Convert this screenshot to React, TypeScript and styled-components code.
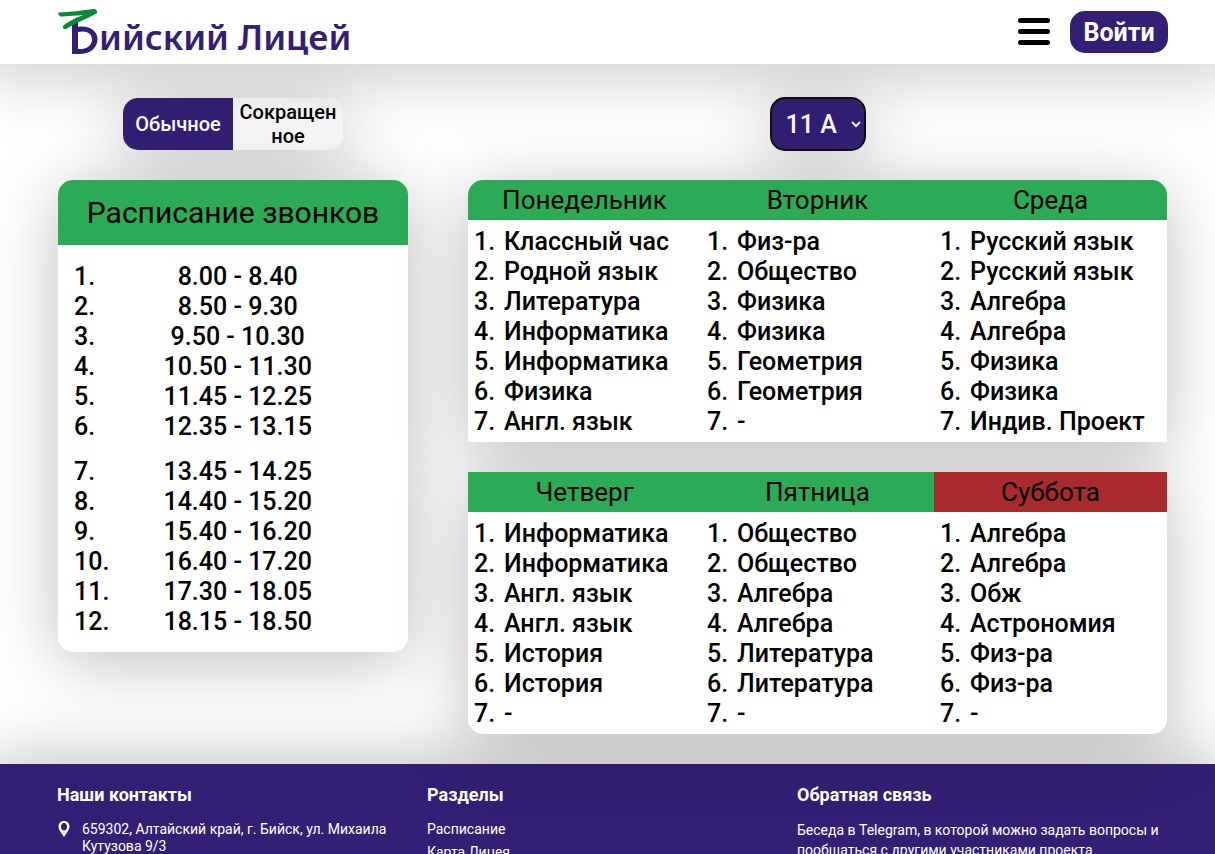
import React, { useState } from "react";
import styled, { createGlobalStyle } from "styled-components";

const purple = "#332075";
const green = "#2cab56";
const red = "#a82a2c";
const softShadow = "0 10px 70px rgba(0, 0, 0, 0.25)";

const GlobalStyle = createGlobalStyle`
  *, *::before, *::after { box-sizing: border-box; }
  body {
    margin: 0;
    background: #fff;
    color: #000;
    font-family: Roboto, "Liberation Sans", sans-serif;
    overflow-x: hidden;
  }
  button, select { font-family: inherit; }
  h2, h3, ol, ul, p { margin: 0; padding: 0; }
`;

const Header = styled.header`
  position: relative;
  z-index: 2;
  display: flex;
  align-items: center;
  justify-content: space-between;
  height: 64px;
  padding: 0 47px 0 58px;
  background: #fff;
  box-shadow: 0 0 60px 20px rgba(0, 0, 0, 0.17);
`;

const Logo = styled.a`
  display: flex;
  align-items: flex-start;
  height: 64px;
  color: ${purple};
  text-decoration: none;
  font: 600 35px/74px "Noto Sans", "Open Sans", sans-serif;
  white-space: nowrap;
`;

const LogoMark = styled.svg`
  flex: none;
  width: 41px;
  height: 64px;
`;

const HeaderActions = styled.div`
  display: flex;
  align-items: center;
  gap: 20px;
`;

const MenuButton = styled.button`
  display: flex;
  flex-direction: column;
  gap: 6px;
  width: 32px;
  padding: 0 0 1px;
  border: 0;
  background: none;
  cursor: pointer;
`;

const MenuBar = styled.span`
  height: 5px;
  border-radius: 3px;
  background: #000;
`;

const LoginButton = styled.button`
  width: 98px;
  height: 42px;
  padding: 2px 0 0;
  border: 0;
  border-radius: 15px;
  background: ${purple};
  color: #fff;
  font-size: 25px;
  font-weight: 700;
  line-height: 40px;
  cursor: pointer;
`;

const Main = styled.main`
  position: relative;
  z-index: 1;
  display: grid;
  grid-template-columns: 350px minmax(0, 1fr);
  column-gap: 60px;
  padding: 32px 48px 30px 58px;
`;

const Column = styled.section`
  display: flex;
  flex-direction: column;
`;

const Controls = styled.div`
  display: flex;
  align-items: center;
  justify-content: center;
  height: 56px;
  margin: 0 0 28px;
`;

const Toggle = styled.div`
  display: flex;
  width: 220px;
  height: 52px;
  overflow: hidden;
  border-radius: 15px;
  box-shadow: ${softShadow};
`;

const ToggleButton = styled.button<{ $active: boolean }>`
  flex: 1 1 0;
  min-width: 0;
  padding: 0 6px;
  border: 0;
  background: ${(p) => (p.$active ? purple : "#f8f8f8")};
  color: ${(p) => (p.$active ? "#fff" : "#000")};
  font-size: 20px;
  font-weight: 500;
  line-height: 24px;
  overflow-wrap: anywhere;
  cursor: pointer;
`;

const ClassSelect = styled.select`
  width: 96px;
  height: 54px;
  padding: 0 0 0 10px;
  border: 2px solid #111;
  border-radius: 15px;
  background: ${purple};
  color: #fff;
  font-size: 25px;
  font-weight: 500;
  box-shadow: ${softShadow};
`;

const BellCard = styled.div`
  overflow: hidden;
  border-radius: 15px;
  background: #fff;
  box-shadow: ${softShadow};
`;

const BellTitle = styled.h2`
  background: ${green};
  font-size: 30px;
  font-weight: 400;
  line-height: 65px;
  text-align: center;
`;

const BellTable = styled.table`
  width: 100%;
  border-collapse: collapse;
  margin: 17px 0 15px;
  font-size: 25px;
  line-height: 30px;
`;

const BellGroup = styled.tbody`
  & + &::before {
    content: "";
    display: block;
    height: 15px;
  }
`;

const BellNumber = styled.th`
  width: 50px;
  padding: 0 0 0 16px;
  font-weight: 500;
  text-align: left;
`;

const BellTime = styled.td`
  padding: 0 42px 0 0;
  font-weight: 500;
  text-align: center;
`;

const Week = styled.div`
  position: relative;
  display: flex;
  flex-direction: column;
  gap: 30px;
  isolation: isolate;
`;

/* The shadow sits on a layer under both rows, so neither row darkens the other. */
const WeekRow = styled.div`
  position: relative;
  &:first-child { border-radius: 15px 15px 0 0; }
  &:last-child { border-radius: 0 0 15px 15px; }
  &::before {
    content: "";
    position: absolute;
    inset: 0;
    z-index: -1;
    border-radius: inherit;
    box-shadow: ${softShadow};
  }
`;

const WeekDays = styled.div`
  display: grid;
  grid-template-columns: repeat(3, minmax(0, 1fr));
  overflow: hidden;
  border-radius: inherit;
  background: #fff;
`;

const DayTitle = styled.h3<{ $today: boolean }>`
  padding-top: 1px;
  background: ${(p) => (p.$today ? red : green)};
  font-size: 26px;
  font-weight: 400;
  line-height: 39px;
  text-align: center;
`;

const Lessons = styled.ol`
  padding: 7px 6px 5px;
  list-style: none;
  font-size: 25px;
  font-weight: 500;
  line-height: 30px;
`;

const Lesson = styled.li`
  display: grid;
  grid-template-columns: 30px 1fr;
  white-space: nowrap;
`;

const Footer = styled.footer`
  display: grid;
  grid-template-columns: repeat(3, 1fr);
  min-height: 220px;
  padding: 20px 48px 30px 57px;
  background: ${purple};
  color: #fff;
  box-shadow: 0 0 60px 10px rgba(0, 0, 0, 0.22);
  font-size: 14px;
  line-height: 17px;
`;

const FooterTitle = styled.h3`
  margin: 0 0 14px;
  font-size: 18px;
  font-weight: 700;
  line-height: 22px;
`;

const Address = styled.p`
  display: flex;
  gap: 12px;
  max-width: 334px;
  padding-top: 1px;
`;

const Pin = styled.svg`
  flex: none;
  width: 13px;
  height: 17px;
`;

const LinkList = styled.ul`
  display: flex;
  flex-direction: column;
  gap: 6px;
  padding-top: 1px;
  list-style: none;
`;

const FooterLink = styled.a`
  color: inherit;
  text-decoration: none;
`;

const Feedback = styled.p`
  line-height: 20px;
`;

const bells = [
  ["8.00 - 8.40", "8.50 - 9.30", "9.50 - 10.30", "10.50 - 11.30", "11.45 - 12.25", "12.35 - 13.15"],
  ["13.45 - 14.25", "14.40 - 15.20", "15.40 - 16.20", "16.40 - 17.20", "17.30 - 18.05", "18.15 - 18.50"],
];

const week = [
  [
    { day: "Понедельник", lessons: ["Классный час", "Родной язык", "Литература", "Информатика", "Информатика", "Физика", "Англ. язык"] },
    { day: "Вторник", lessons: ["Физ-ра", "Общество", "Физика", "Физика", "Геометрия", "Геометрия", "-"] },
    { day: "Среда", lessons: ["Русский язык", "Русский язык", "Алгебра", "Алгебра", "Физика", "Физика", "Индив. Проект"] },
  ],
  [
    { day: "Четверг", lessons: ["Информатика", "Информатика", "Англ. язык", "Англ. язык", "История", "История", "-"] },
    { day: "Пятница", lessons: ["Общество", "Общество", "Алгебра", "Алгебра", "Литература", "Литература", "-"] },
    { day: "Суббота", lessons: ["Алгебра", "Алгебра", "Обж", "Астрономия", "Физ-ра", "Физ-ра", "-"] },
  ],
];

export default function App() {
  const [short, setShort] = useState(false);
  return (
    <>
      <GlobalStyle />
      <Header>
        <Logo href="#" aria-label="Бийский Лицей">
          <LogoMark viewBox="0 0 41 64" aria-hidden="true">
            <path
              fill={purple}
              fillRule="evenodd"
              d="M14 25 L20 21 V27 C31 25 39.500 31 39.500 39 C39.500 48 32 54 21 54 H14 Z M20 32 V49 C28 49.500 34 46 34 39.500 C34 33 28 30 20 32 Z"
            />
            <path
              fill="#088a36"
              d="M0.500 12.500 C12 12 24 10.500 36 9 C38.500 9 40 11.500 38.500 13.500 C30 18.500 17 23 9 28.500 C6.500 30 4.500 29 5 26 C10 21.500 18 18 25 15 C19 15.500 10 16 3 16.500 C1 16 0 14 0.500 12.500 Z"
            />
          </LogoMark>
          <span>ийский Лицей</span>
        </Logo>
        <HeaderActions>
          <MenuButton type="button" aria-label="Меню">
            <MenuBar />
            <MenuBar />
            <MenuBar />
          </MenuButton>
          <LoginButton type="button">Войти</LoginButton>
        </HeaderActions>
      </Header>
      <Main>
        <Column>
          <Controls>
            <Toggle>
              <ToggleButton type="button" $active={!short} onClick={() => setShort(false)}>
                Обычное
              </ToggleButton>
              <ToggleButton type="button" $active={short} onClick={() => setShort(true)}>
                Сокращенное
              </ToggleButton>
            </Toggle>
          </Controls>
          <BellCard>
            <BellTitle id="bells">Расписание звонков</BellTitle>
            <BellTable aria-labelledby="bells">
              {bells.map((group, g) => (
                <BellGroup key={g}>
                  {group.map((time, i) => (
                    <tr key={time}>
                      <BellNumber scope="row">{g * 6 + i + 1}.</BellNumber>
                      <BellTime>{time}</BellTime>
                    </tr>
                  ))}
                </BellGroup>
              ))}
            </BellTable>
          </BellCard>
        </Column>
        <Column>
          <Controls>
            <ClassSelect aria-label="Класс" defaultValue="11 А">
              <option>11 А</option>
              <option>9 А</option>
            </ClassSelect>
          </Controls>
          <Week>
            {week.map((row, r) => (
              <WeekRow key={r}>
                <WeekDays>
                  {row.map(({ day, lessons }) => (
                    <div key={day}>
                      <DayTitle $today={day === "Суббота"}>{day}</DayTitle>
                      <Lessons>
                        {lessons.map((lesson, i) => (
                          <Lesson key={i}>
                            <span>{i + 1}.</span>
                            <span>{lesson}</span>
                          </Lesson>
                        ))}
                      </Lessons>
                    </div>
                  ))}
                </WeekDays>
              </WeekRow>
            ))}
          </Week>
        </Column>
      </Main>
      <Footer>
        <div>
          <FooterTitle>Наши контакты</FooterTitle>
          <Address>
            <Pin viewBox="0 0 13 17" aria-hidden="true">
              <path
                fill="#fff"
                fillRule="evenodd"
                d="M7 0 C3.500 0 1.500 2.500 1.500 5.500 C1.500 9 4.500 12 7 16 C9.500 12 12.500 9 12.500 5.500 C12.500 2.500 10.500 0 7 0 Z M7 2 C9 2 10 3.800 10 5.800 C10 8 9 9.500 7 9.500 C5 9.500 4 8 4 5.800 C4 3.800 5 2 7 2 Z"
              />
            </Pin>
            <span>659302, Алтайский край, г. Бийск, ул. Михаила Кутузова 9/3</span>
          </Address>
        </div>
        <nav>
          <FooterTitle>Разделы</FooterTitle>
          <LinkList>
            <li><FooterLink href="#">Расписание</FooterLink></li>
            <li><FooterLink href="#">Карта Лицея</FooterLink></li>
          </LinkList>
        </nav>
        <div>
          <FooterTitle>Обратная связь</FooterTitle>
          <Feedback>Беседа в Telegram, в которой можно задать вопросы и пообщаться с другими участниками проекта</Feedback>
        </div>
      </Footer>
    </>
  );
}
